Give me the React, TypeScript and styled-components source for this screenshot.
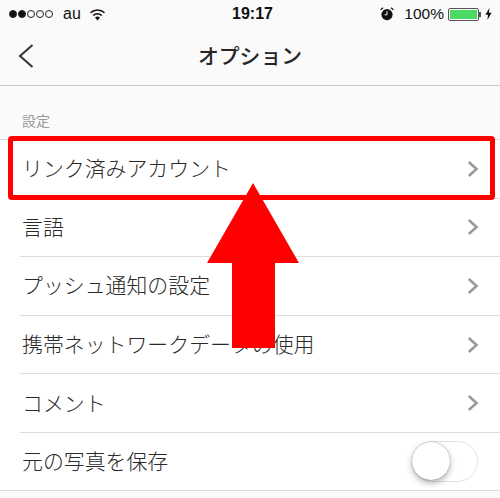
import styled, { createGlobalStyle } from "styled-components";

const rows = [
  "リンク済みアカウント",
  "言語",
  "プッシュ通知の設定",
  "携帯ネットワークデータの使用",
  "コメント",
];

function App() {
  return (
    <Page>
      <GlobalStyle />
      <StatusBar>
        <StatusLeft>
          <Signal>
            {[true, true, false, false, false].map((on, i) => (
              <Dot key={i} $on={on} />
            ))}
          </Signal>
          <Carrier>au</Carrier>
          <svg width="17" height="13" viewBox="0 0 17 13">
            <path d="M8.5 12.5 L6 9.6 A3.6 3.6 0 0 1 11 9.6 Z" fill="#111" />
            <path d="M4.2 7.5 A6.2 6.2 0 0 1 12.8 7.5" fill="none" stroke="#111" strokeWidth="1.6" />
            <path d="M1.5 4.8 A10 10 0 0 1 15.5 4.8" fill="none" stroke="#111" strokeWidth="1.6" />
          </svg>
        </StatusLeft>
        <Clock>19:17</Clock>
        <StatusRight>
          <svg width="14" height="14" viewBox="0 0 14 14">
            <circle cx="7" cy="7.6" r="5.6" fill="#111" />
            <path d="M7 4.2 V7.8 H4.6" fill="none" stroke="#fff" strokeWidth="1" />
            <path d="M0.6 2.8 L3 0.8 M13.4 2.8 L11 0.8" stroke="#111" strokeWidth="1.2" />
          </svg>
          <Percent>100%</Percent>
          <Battery>
            <BatteryFill />
          </Battery>
          <BatteryTip />
          <svg width="7" height="12" viewBox="0 0 7 12">
            <path d="M4.4 0 L0.4 6.8 H3 L2.4 12 L6.6 4.8 H3.9 Z" fill="#111" />
          </svg>
        </StatusRight>
      </StatusBar>
      <NavBar>
        <BackIcon width="16" height="26" viewBox="0 0 16 26">
          <path d="M14.5 2 L2 13 L14.5 24" fill="none" stroke="#333" strokeWidth="2" />
        </BackIcon>
        <Title>オプション</Title>
      </NavBar>
      <SectionLabel>設定</SectionLabel>
      <List>
        {rows.map((label) => (
          <Row key={label}>
            <RowLabel>{label}</RowLabel>
            <svg width="12" height="18" viewBox="0 0 12 18">
              <path d="M1.8 2 L9.5 9 L1.8 16" fill="none" stroke="#999" strokeWidth="2.6" />
            </svg>
          </Row>
        ))}
        <Row>
          <RowLabel>元の写真を保存</RowLabel>
          <Toggle>
            <Knob />
          </Toggle>
        </Row>
      </List>
      <Highlight />
      <BigArrow width="92" height="165" viewBox="0 0 92 165">
        <path d="M46 0 L92 80 H68 V165 H25 V80 H0 Z" fill="#ff0000" />
      </BigArrow>
    </Page>
  );
}
export default App;

const GlobalStyle = createGlobalStyle`
  html, body {
    margin: 0;
    padding: 0;
    background: #fafafa;
  }
  * {
    box-sizing: border-box;
  }
`;

const Page = styled.div`
  position: relative;
  width: 500px;
  height: 498px;
  overflow: hidden;
  background-color: #fafafa;
  font-family: "Noto Sans CJK JP", "Liberation Sans", sans-serif;
  color: #333;
`;

const StatusBar = styled.div`
  position: relative;
  display: flex;
  align-items: center;
  justify-content: space-between;
  height: 28px;
  padding: 0 8px 0 9px;
  font-family: "Liberation Sans", sans-serif;
  font-size: 16px;
  color: #111;
`;

const StatusLeft = styled.div`
  display: flex;
  align-items: center;
`;

const Signal = styled.div`
  display: flex;
  gap: 1px;
  margin-right: 10px;
`;

const Dot = styled.span<{ $on: boolean }>`
  width: 8px;
  height: 8px;
  border-radius: 50%;
  border: 1px solid #222;
  background-color: ${({ $on }) => ($on ? "#111" : "transparent")};
`;

const Carrier = styled.span`
  margin-right: 8px;
`;

const Clock = styled.span`
  position: absolute;
  left: 232px;
  font-weight: 700;
`;

const StatusRight = styled.div`
  display: flex;
  align-items: center;
`;

const Percent = styled.span`
  margin: 0 4px 0 10px;
  font-size: 15.5px;
`;

const Battery = styled.div`
  width: 31px;
  height: 13px;
  padding: 1px;
  border: 1px solid #555;
  border-radius: 2px;
`;

const BatteryFill = styled.div`
  width: 100%;
  height: 100%;
  background-color: #4cd964;
`;

const BatteryTip = styled.div`
  width: 2px;
  height: 5px;
  margin-right: 4px;
  background-color: #555;
`;

const NavBar = styled.div`
  position: relative;
  display: flex;
  align-items: center;
  justify-content: center;
  height: 58px;
  padding-bottom: 4px;
  border-bottom: 1px solid #c8c8c8;
`;

const BackIcon = styled.svg`
  position: absolute;
  left: 18px;
  top: 15px;
`;

const Title = styled.h1`
  margin: 0;
  font-size: 20.8px;
  font-weight: 500;
  color: #262626;
`;

const SectionLabel = styled.div`
  height: 53px;
  padding: 24px 0 0 22px;
  font-size: 14px;
  line-height: 20px;
  color: #999;
`;

const List = styled.div`
  background-color: #fff;
  border-top: 1px solid #dcdcdc;
  border-bottom: 1px solid #dcdcdc;
`;

const Row = styled.div`
  display: flex;
  align-items: center;
  justify-content: space-between;
  height: 58.6px;
  margin-left: 20px;
  padding: 0 21px 0 2px;
  border-bottom: 1px solid #dedede;
  &:last-child {
    border-bottom: none;
    height: 57px;
  }
`;

const RowLabel = styled.span`
  margin-bottom: 3px;
  font-size: 20.9px;
  font-weight: 300;
  color: #2a2a2a;
`;

const Toggle = styled.div`
  position: relative;
  width: 66px;
  height: 41px;
  margin-right: 1px;
  border: 1px solid #e2e2e2;
  border-radius: 21px;
  background-color: #fff;
`;

const Knob = styled.div`
  position: absolute;
  left: -1px;
  top: 0;
  width: 38px;
  height: 38px;
  border-radius: 50%;
  background-color: #fff;
  box-shadow: 0 3px 6px rgba(0, 0, 0, 0.3), 0 0 1px rgba(0, 0, 0, 0.5);
`;

const Highlight = styled.div`
  position: absolute;
  left: 8px;
  top: 136px;
  width: 487px;
  height: 64px;
  border: 5px solid #ff0000;
  border-radius: 4px;
`;

const BigArrow = styled.svg`
  position: absolute;
  left: 207px;
  top: 183px;
`;
